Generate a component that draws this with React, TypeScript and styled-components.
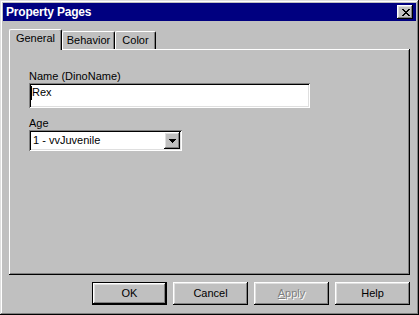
import React from "react";
import styled, { createGlobalStyle } from "styled-components";

const GlobalStyle = createGlobalStyle`
  html, body { margin: 0; padding: 0; background: #c0c0c0; }
  body {
    font-family: "Liberation Sans", Arial, sans-serif;
    font-size: 11px;
    color: #000;
  }
  * { box-sizing: border-box; }
`;

const raised = `
  box-shadow:
    inset -1px -1px 0 #000,
    inset 1px 1px 0 #fff,
    inset -2px -2px 0 #808080,
    inset 2px 2px 0 #dfdfdf;
`;

const sunken = `
  box-shadow:
    inset 1px 1px 0 #808080,
    inset -1px -1px 0 #fff,
    inset 2px 2px 0 #000,
    inset -2px -2px 0 #dfdfdf;
`;

const Window = styled.div`
  width: 419px;
  height: 315px;
  background: #c0c0c0;
  padding: 3px;
  display: flex;
  flex-direction: column;
  box-shadow:
    inset -1px -1px 0 #000,
    inset 1px 1px 0 #dfdfdf,
    inset -2px -2px 0 #808080,
    inset 2px 2px 0 #fff;
`;

const TitleBar = styled.div`
  height: 18px;
  background: #000080;
  display: flex;
  align-items: center;
  justify-content: space-between;
  padding: 0 3px 0 3px;
`;

const TitleText = styled.span`
  color: #fff;
  font-weight: bold;
  font-size: 12px;
  letter-spacing: -0.2px;
  line-height: 18px;
`;

const CloseButton = styled.div`
  width: 16px;
  height: 14px;
  background: #c0c0c0;
  display: flex;
  align-items: center;
  justify-content: center;
  padding-left: 1px;
  ${raised}
`;

const Body = styled.div`
  flex: 1;
  display: flex;
  flex-direction: column;
  padding: 8px 6px 7px 6px;
`;

const TabRow = styled.div`
  display: flex;
  align-items: flex-end;
  height: 20px;
  position: relative;
  z-index: 1;
`;

const Tab = styled.div<{ $active?: boolean; $w: number }>`
  width: ${(p) => p.$w}px;
  height: ${(p) => (p.$active ? 21 : 18)}px;
  margin-bottom: ${(p) => (p.$active ? -1 : 0)}px;
  background: #c0c0c0;
  border-top: 1px solid #fff;
  border-left: 1px solid #fff;
  border-right: 1px solid #000;
  border-radius: 2px 2px 0 0;
  box-shadow: inset -1px 0 0 #808080;
  display: flex;
  align-items: center;
  justify-content: center;
  padding-bottom: ${(p) => (p.$active ? 3 : 0)}px;
  line-height: 13px;
`;

const Panel = styled.div`
  height: 226px;
  background: #c0c0c0;
  padding: 20px 20px;
  display: flex;
  flex-direction: column;
  align-items: flex-start;
  box-shadow:
    inset -1px -1px 0 #000,
    inset 1px 1px 0 #fff,
    inset -2px -2px 0 #808080;
`;

const FieldLabel = styled.div<{ $gap?: number }>`
  line-height: 14px;
  margin-top: ${(p) => p.$gap ?? 0}px;
`;

const TextBox = styled.div`
  width: 281px;
  height: 25px;
  background: #fff;
  padding: 3px 2px 0 2px;
  display: flex;
  align-items: flex-start;
  line-height: 13px;
  ${sunken}
`;

const Caret = styled.span`
  display: inline-block;
  width: 1px;
  height: 14px;
  background: #000;
  margin-right: 0px;
`;

const Combo = styled.div`
  width: 153px;
  height: 21px;
  background: #fff;
  padding: 2px;
  display: flex;
  ${sunken}
`;

const ComboText = styled.div`
  flex: 1;
  line-height: 17px;
  padding-left: 2px;
`;

const ComboButton = styled.div`
  width: 16px;
  height: 17px;
  background: #c0c0c0;
  display: flex;
  align-items: center;
  justify-content: center;
  ${raised}
`;

const ButtonRow = styled.div`
  display: flex;
  justify-content: flex-end;
  gap: 6px;
  margin-top: 7px;
`;

const PushButton = styled.div<{ $default?: boolean; $disabled?: boolean }>`
  width: 75px;
  height: 23px;
  background: #c0c0c0;
  display: flex;
  align-items: center;
  justify-content: center;
  line-height: 13px;
  color: ${(p) => (p.$disabled ? "#808080" : "#000")};
  text-shadow: ${(p) => (p.$disabled ? "1px 1px 0 #fff" : "none")};
  box-shadow: ${(p) =>
    p.$default
      ? `inset 0 0 0 1px #000,
         inset -2px -2px 0 #000,
         inset 2px 2px 0 #fff,
         inset -3px -3px 0 #808080,
         inset 3px 3px 0 #dfdfdf`
      : `inset -1px -1px 0 #000,
         inset 1px 1px 0 #fff,
         inset -2px -2px 0 #808080,
         inset 2px 2px 0 #dfdfdf`};
`;

const CloseGlyph = () => (
  <svg width="8" height="7" viewBox="0 0 8 7" shapeRendering="crispEdges">
    <path
      d="M0 0h2v1h-2z M6 0h2v1h-2z M1 1h2v1h-2z M5 1h2v1h-2z M2 2h4v1h-4z M3 3h2v1h-2z M2 4h4v1h-4z M1 5h2v1h-2z M5 5h2v1h-2z M0 6h2v1h-2z M6 6h2v1h-2z"
      fill="#000"
    />
  </svg>
);

const DownArrow = () => (
  <svg width="7" height="4" viewBox="0 0 7 4" shapeRendering="crispEdges">
    <path d="M0 0h7v1h-7z M1 1h5v1h-5z M2 2h3v1h-3z M3 3h1v1h-1z" fill="#000" />
  </svg>
);

export default function App() {
  return (
    <>
      <GlobalStyle />
      <Window>
        <TitleBar>
          <TitleText>Property Pages</TitleText>
          <CloseButton>
            <CloseGlyph />
          </CloseButton>
        </TitleBar>
        <Body>
          <TabRow>
            <Tab $active $w={53}>General</Tab>
            <Tab $w={53}>Behavior</Tab>
            <Tab $w={41}>Color</Tab>
          </TabRow>
          <Panel>
            <FieldLabel>Name (DinoName)</FieldLabel>
            <TextBox>
              <Caret />
              <span>Rex</span>
            </TextBox>
            <FieldLabel $gap={8}>Age</FieldLabel>
            <Combo>
              <ComboText>1 - vvJuvenile</ComboText>
              <ComboButton>
                <DownArrow />
              </ComboButton>
            </Combo>
          </Panel>
          <ButtonRow>
            <PushButton $default>OK</PushButton>
            <PushButton>Cancel</PushButton>
            <PushButton $disabled>
              <span>
                <u>A</u>pply
              </span>
            </PushButton>
            <PushButton>Help</PushButton>
          </ButtonRow>
        </Body>
      </Window>
    </>
  );
}
